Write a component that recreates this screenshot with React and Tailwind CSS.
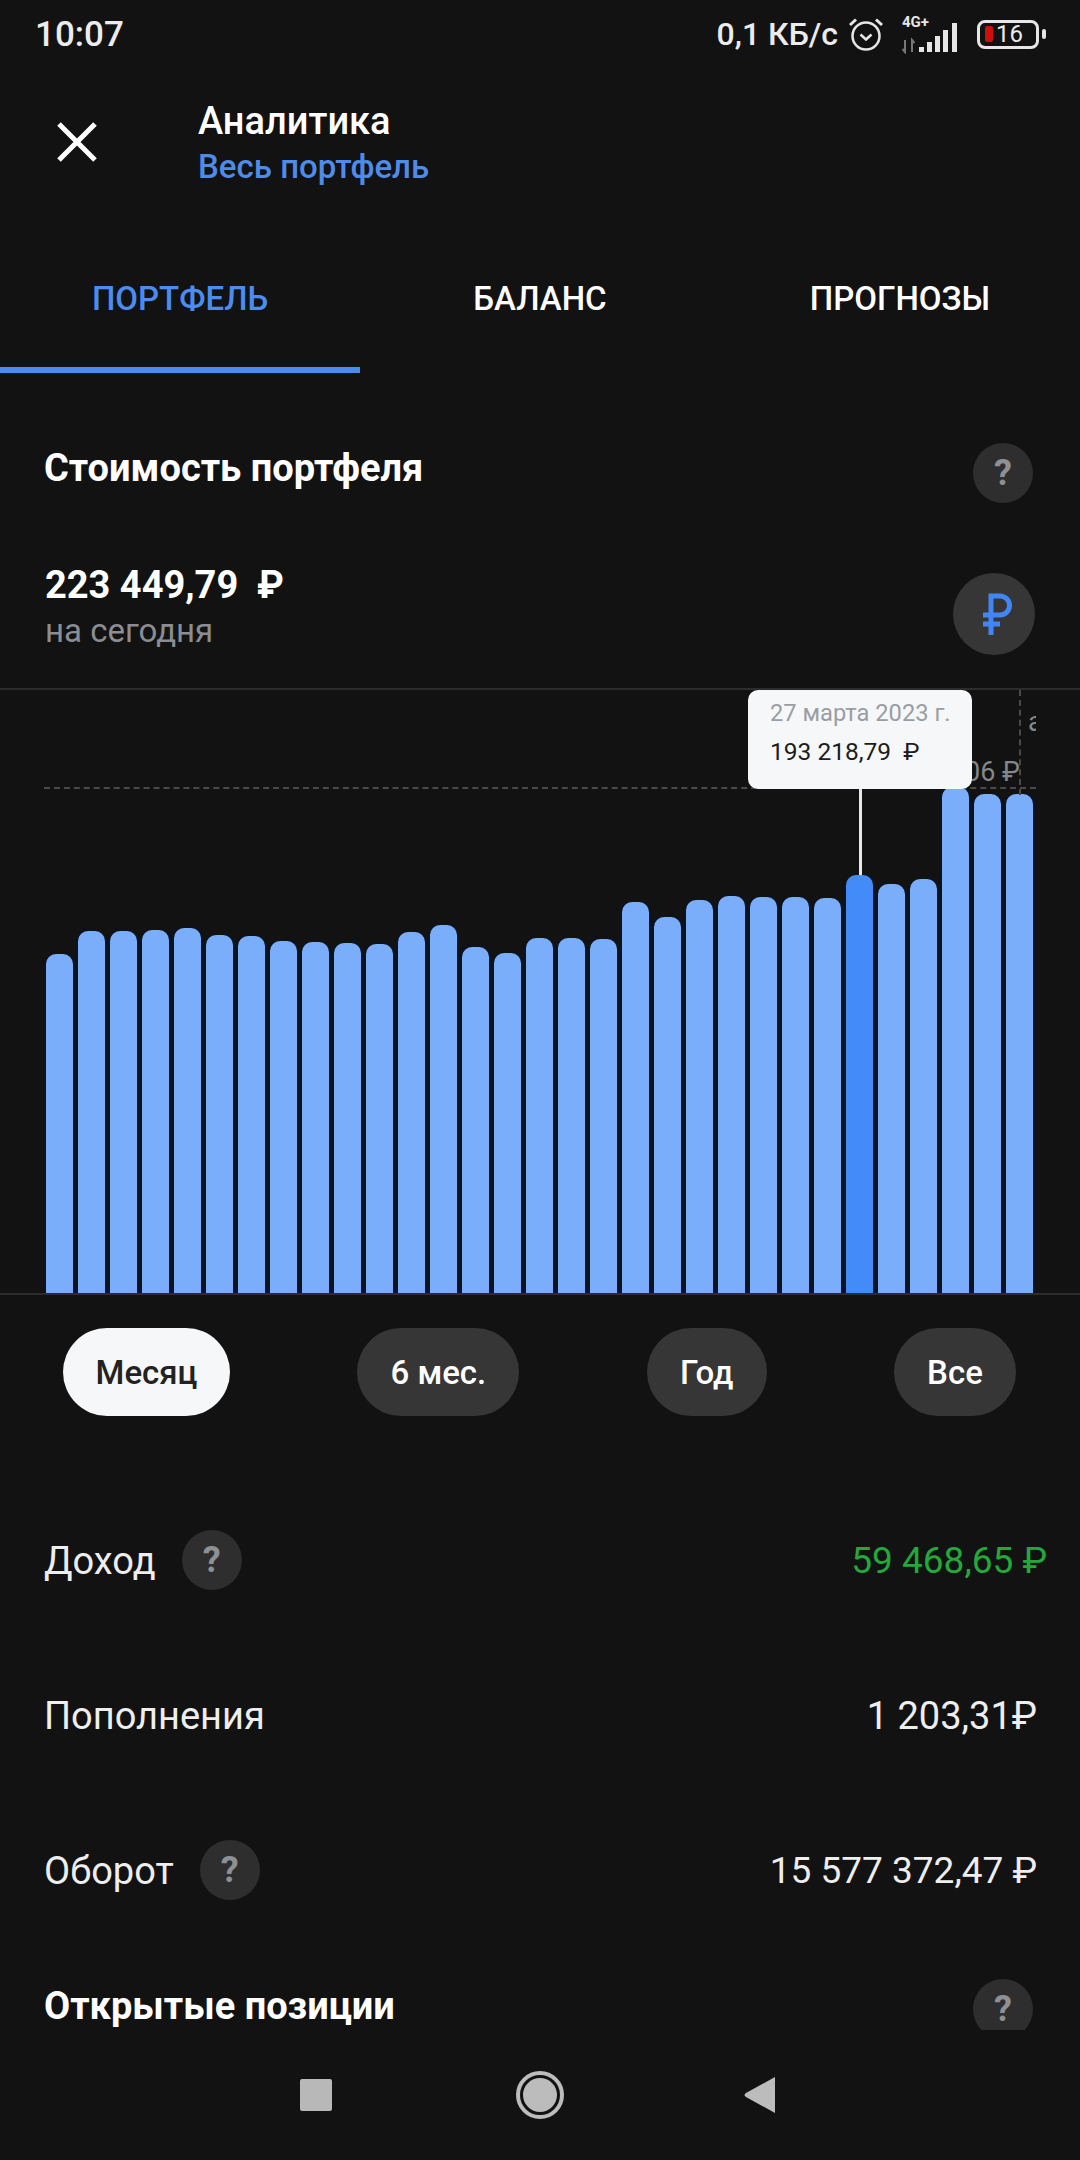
const BAR_TOPS = [955, 932, 932, 931, 929, 936, 937, 942, 943, 944, 945, 933, 926, 948, 954, 939, 939, 940, 903, 918, 901, 897, 898, 898, 899, 876, 885, 880, 788, 795, 795];
const SELECTED_BAR = 25;
const CHART_BOTTOM = 1294;

function Help({ className = '' }) {
  return (
    <div className={`w-[60px] h-[60px] shrink-0 rounded-full bg-[#2e2e2e] flex items-center justify-center text-[36px] font-bold text-[#8e9094] ${className}`}>?</div>
  );
}

function StatusBar() {
  return (
    <div className="h-[68px] shrink-0 flex items-center justify-between pl-[35px] text-[#ececec]">
      <span className="text-[35px] font-medium leading-none">10:07</span>
      <div className="flex items-center h-full">
        <span className="text-[32px] font-medium leading-none">0,1 КБ/с</span>
        <svg className="ml-[10px]" width="36" height="36" viewBox="0 0 36 36" fill="none" stroke="#e6e6e6">
          <circle cx="18" cy="20" r="13.5" strokeWidth="2.5" />
          <path d="M12.5 18.5 L18 23.5 L23.5 18.5" strokeWidth="2.5" />
          <path d="M2 9 L8 3.5 M34 9 L28 3.5" strokeWidth="3" />
        </svg>
        <svg className="ml-[18px]" width="60" height="40" viewBox="0 0 60 40" fill="#e6e6e6">
          <text x="0" y="13" fontSize="15" fontWeight="700" fontFamily="Roboto, sans-serif">4G+</text>
          <path d="M3 26 V38 M0.5 35 L3 38 L3 35 M10 38 V26 L12.5 29" stroke="#777" strokeWidth="2" fill="none" />
          <rect x="17" y="33" width="5" height="5" />
          <rect x="25" y="28" width="5" height="10" />
          <rect x="33" y="22" width="5" height="16" />
          <rect x="41" y="16" width="5" height="22" />
          <rect x="50" y="9" width="5" height="29" />
        </svg>
        <div className="ml-[15px] relative w-[62px] h-[29px] rounded-[8px] border-[3px] border-[#e6e6e6] flex items-center">
          <div className="ml-[5px] w-[8px] h-[16px] rounded-[2px] bg-[#cf0f0f]" />
          <span className="ml-[3px] text-[24px] leading-none">16</span>
        </div>
        <div className="ml-[3px] mr-[34px] w-[4px] h-[10px] rounded-full bg-[#e6e6e6]" />
      </div>
    </div>
  );
}

function Header() {
  return (
    <div className="h-[148px] shrink-0 flex items-center">
      <svg className="ml-[54px]" width="46" height="46" viewBox="0 0 46 46" stroke="#fff" strokeWidth="5">
        <path d="M5 5 L41 41 M41 5 L5 41" />
      </svg>
      <div className="ml-[98px] mt-[4px] flex flex-col">
        <span className="text-[38px] font-medium leading-[46px] text-white">Аналитика</span>
        <span className="text-[33px] font-medium leading-[46px] text-[#4f8be8]">Весь портфель</span>
      </div>
    </div>
  );
}

function Tabs() {
  return (
    <div className="h-[157px] shrink-0 pt-[15px] grid grid-cols-3 text-[33px] font-medium">
      <div className="flex items-center justify-center border-b-[6px] border-[#4a8cf0] text-[#4a8cf0]">ПОРТФЕЛЬ</div>
      <div className="flex items-center justify-center pb-[6px] text-white">БАЛАНС</div>
      <div className="flex items-center justify-center pb-[6px] text-white">ПРОГНОЗЫ</div>
    </div>
  );
}

function Chart() {
  return (
    <div className="relative h-[607px] shrink-0 px-[46px] flex items-end gap-[5px] border-t-2 border-b-2 border-[#2c2c2c]">
      <div className="absolute left-[44px] right-[44px] top-[97px] border-t-2 border-dashed border-[#4a4a4a]" />
      <div className="absolute left-[1019px] top-0 h-[105px] border-l-2 border-dashed border-[#4a4a4a]" />
      <span className="absolute right-[60px] top-[66px] text-[27px] leading-[32px] text-[#85878b]">06 ₽</span>
      <div className="absolute left-[1028px] top-[14px] w-[8px] h-[36px] overflow-hidden text-[27px] leading-[36px] text-[#85878b]">а</div>

      {BAR_TOPS.map((top, i) => (
        <div
          key={i}
          className={`w-[27px] shrink-0 rounded-t-[10px] shadow-[2px_0_0_0_#0a1420,-2px_0_0_0_#0a1420] ${i === SELECTED_BAR ? 'bg-[#428bf9]' : 'bg-[#7aaefb]'}`}
          style={{ height: CHART_BOTTOM - top }}
        />
      ))}

      <div className="absolute left-[859px] top-[97px] h-[88px] w-[3px] bg-[#e8e8e8]" />
      <div className="absolute left-[748px] top-0 w-[224px] h-[99px] rounded-[10px] bg-[#f6f7f8] pl-[22px] pt-[7px]">
        <div className="text-[23.7px] leading-[32px] text-[#9a9da3] whitespace-nowrap">27 марта 2023 г.</div>
        <div className="mt-[7px] text-[24.5px] leading-[32px] text-[#1c1d20] whitespace-nowrap">193 218,79&nbsp; ₽</div>
      </div>
    </div>
  );
}

function Pills() {
  return (
    <div className="mt-[33px] pl-[63px] pr-[64px] flex justify-between text-[33px] font-medium">
      <div className="w-[167px] h-[88px] pt-[2px] rounded-full bg-[#f6f7f8] text-[#222] flex items-center justify-center">Месяц</div>
      <div className="w-[162px] h-[88px] pt-[2px] rounded-full bg-[#363636] text-white flex items-center justify-center">6 мес.</div>
      <div className="w-[120px] h-[88px] pt-[2px] rounded-full bg-[#363636] text-white flex items-center justify-center">Год</div>
      <div className="w-[122px] h-[88px] pt-[2px] rounded-full bg-[#363636] text-white flex items-center justify-center">Все</div>
    </div>
  );
}

function Row({ label, value, help, valueClass, rightPad }) {
  return (
    <div className={`h-[155px] flex items-center justify-between pl-[44px] ${rightPad}`}>
      <div className="flex items-center gap-[26px]">
        <span className="text-[38px] text-[#eeeeee] leading-none pt-[2px]">{label}</span>
        {help && <Help />}
      </div>
      <span className={`leading-none pt-[2px] ${valueClass}`}>{value}</span>
    </div>
  );
}

function NavBar() {
  return (
    <div className="flex-1 flex items-center justify-center pr-[5px]">
      <div className="w-[32px] h-[32px] rounded-[2px] bg-[#b8b8b8]" />
      <div className="ml-[184px] w-[48px] h-[48px] rounded-full border-[4px] border-[#bcbcbc] flex items-center justify-center">
        <div className="w-[34px] h-[34px] rounded-full bg-[#bcbcbc]" />
      </div>
      <svg className="ml-[180px]" width="32" height="38" viewBox="0 0 32 38" fill="#bcbcbc">
        <path d="M31 1 V37 L2 21 Q-1 19 2 17 Z" />
      </svg>
    </div>
  );
}

export default function App() {
  return (
    <div className="w-[1080px] h-[2160px] bg-[#121212] flex flex-col overflow-hidden font-['Roboto',sans-serif]">
      <StatusBar />
      <Header />
      <Tabs />
      <div className="h-[1657px] shrink-0 overflow-hidden flex flex-col">
        <div className="mt-[70px] flex justify-between pl-[44px] pr-[47px] shrink-0">
          <span className="text-[38px] font-bold leading-[50px] text-white">Стоимость портфеля</span>
          <Help />
        </div>
        <div className="mt-[69px] h-[83px] mb-[33px] flex justify-between items-center pl-[45px] pr-[45px] shrink-0">
          <div className="flex flex-col -mt-[11px]">
            <span className="text-[38px] font-bold leading-[46px] text-white">223 449,79&nbsp; ₽</span>
            <span className="text-[33px] leading-[46px] text-[#8a8d93]">на сегодня</span>
          </div>
          <div className="w-[82px] h-[82px] rounded-full bg-[#363636] flex items-center justify-center">
            <svg className="ml-[6px]" width="30" height="42" viewBox="0 0 30 42" fill="none" stroke="#4285f4" strokeWidth="5">
              <path d="M9 42 V3 H18 A9.5 9.5 0 0 1 18 22 H1" />
              <path d="M1 31 H18" />
            </svg>
          </div>
        </div>
        <Chart />
        <Pills />
        <div className="mt-[66px] flex flex-col">
          <Row label="Доход" value="59 468,65 ₽" help valueClass="text-[37px] text-[#22a93a]" rightPad="pr-[33px]" />
          <Row label="Пополнения" value="1 203,31₽" valueClass="text-[38px] text-[#eeeeee]" rightPad="pr-[43px]" />
          <Row label="Оборот" value="15 577 372,47 ₽" help valueClass="text-[37px] text-[#eeeeee]" rightPad="pr-[43px]" />
        </div>
        <div className="mt-[32px] flex justify-between items-start pl-[44px] pr-[47px] shrink-0">
          <span className="text-[38px] font-bold leading-[50px] mt-[2px] text-white">Открытые позиции</span>
          <Help />
        </div>
      </div>
      <NavBar />
    </div>
  );
}
